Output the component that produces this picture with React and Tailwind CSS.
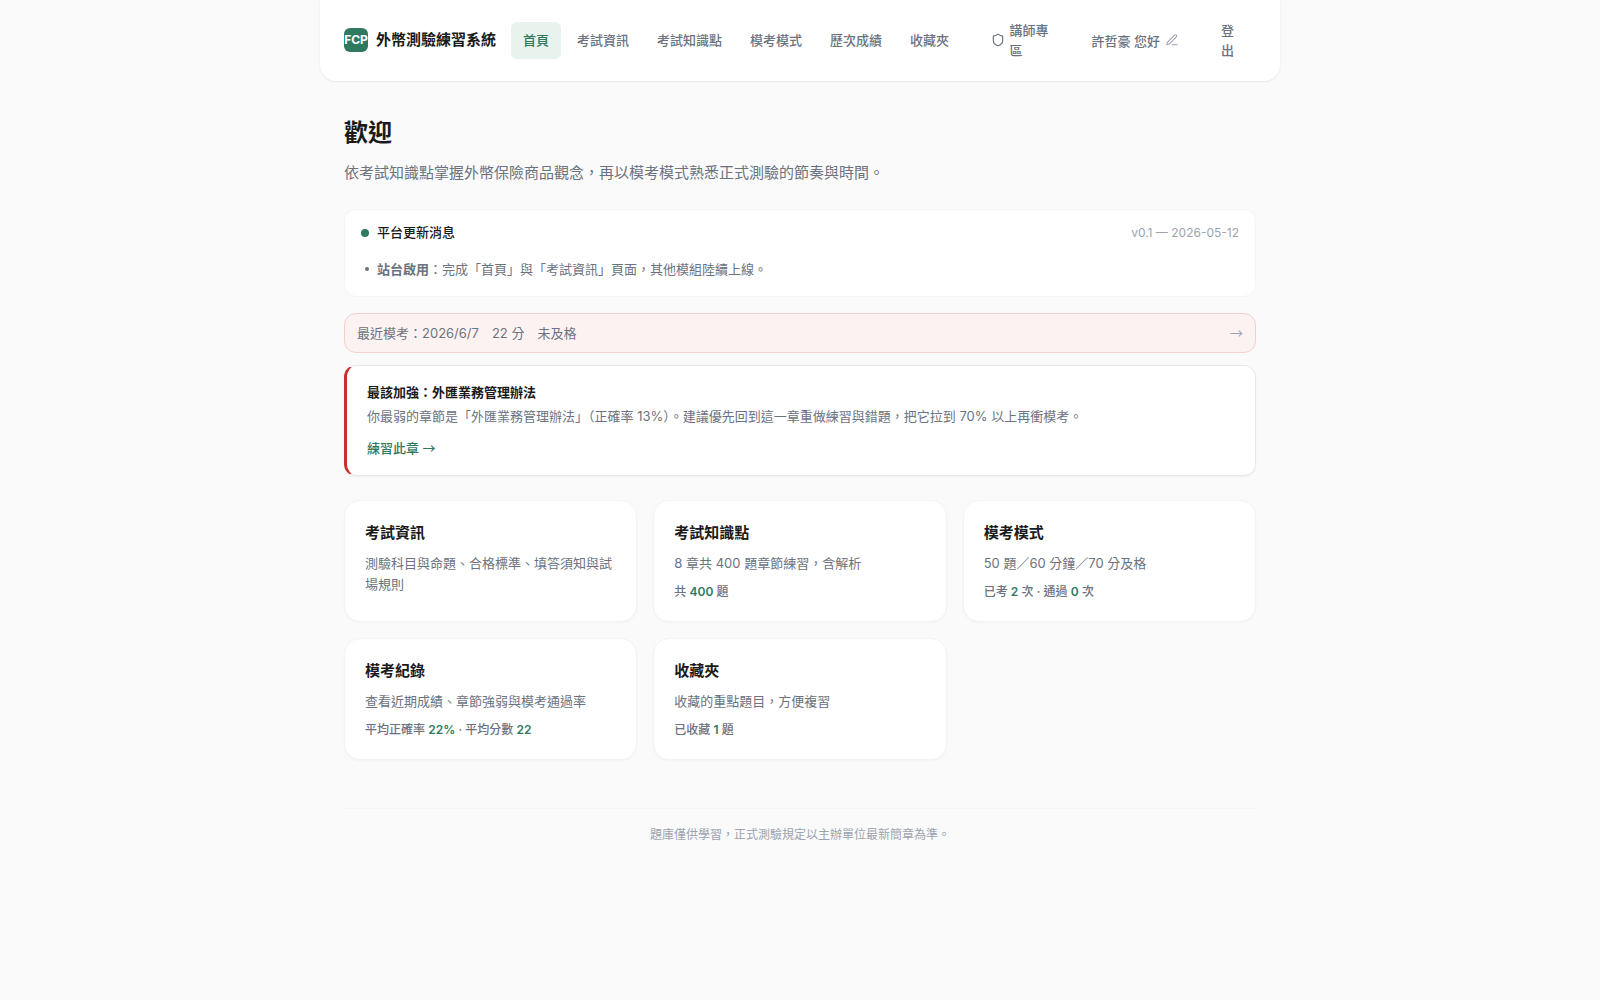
import React from 'react';

const navItems = ['首頁', '考試資訊', '考試知識點', '模考模式', '歷次成績', '收藏夾'];

const cards = [
  { title: '考試資訊', desc: '測驗科目與命題、合格標準、填答須知與試場規則' },
  { title: '考試知識點', desc: '8 章共 400 題章節練習，含解析', meta: ['共 ', '400', ' 題'] },
  { title: '模考模式', desc: '50 題／60 分鐘／70 分及格', meta: ['已考 ', '2', ' 次 · 通過 ', '0', ' 次'] },
  { title: '模考紀錄', desc: '查看近期成績、章節強弱與模考通過率', meta: ['平均正確率 ', '22%', ' · 平均分數 ', '22'] },
  { title: '收藏夾', desc: '收藏的重點題目，方便複習', meta: ['已收藏 ', '1', ' 題'] },
];

const ShieldIcon = () => (
  <svg width="14" height="14" viewBox="0 0 24 24" fill="none" stroke="currentColor" strokeWidth="2" strokeLinecap="round" strokeLinejoin="round" className="shrink-0">
    <path d="M20 13c0 5-3.5 7.5-7.66 8.95a1 1 0 0 1-.67-.01C7.5 20.5 4 18 4 13V6a1 1 0 0 1 1-1c2 0 4.5-1.2 6.24-2.72a1.17 1.17 0 0 1 1.52 0C14.51 3.81 17 5 19 5a1 1 0 0 1 1 1z" />
  </svg>
);

const PenIcon = () => (
  <svg width="14" height="14" viewBox="0 0 24 24" fill="none" stroke="currentColor" strokeWidth="1.8" strokeLinecap="round" strokeLinejoin="round">
    <path d="M12 20h9" />
    <path d="M16.5 3.5a2.121 2.121 0 0 1 3 3L7 19l-4 1 1-4L16.5 3.5z" />
  </svg>
);

const Arrow = () => <span className="font-['Noto_Sans_CJK_TC',sans-serif]">→</span>;

const Header = () => (
  <header className="flex items-center rounded-b-2xl bg-white px-6 pt-5 pb-[21px] shadow-[0_1px_2px_rgba(0,0,0,0.08)]">
    <a href="#home" className="flex shrink-0 items-center gap-2">
      <span className="flex h-6 w-6 items-center justify-center rounded-md bg-[#2f7a5f] text-xs font-bold text-white">FCP</span>
      <span className="text-[15px] font-bold text-[#1a1a1a]">外幣測驗練習系統</span>
    </a>
    <nav className="ml-[15px] flex shrink-0 gap-1">
      {navItems.map((item, index) => (
        <a
          key={item}
          href="#nav"
          className={`rounded-md px-3 py-2 text-[13px] leading-[21px] font-medium ${index === 0 ? 'bg-[#e8f3ee] text-[#2f7a5f]' : 'text-[#6b7280]'}`}
        >
          {item}
        </a>
      ))}
    </nav>
    <div className="ml-auto flex items-center text-[13px] font-medium text-[#6b7280]">
      <a href="#instructor" className="flex items-center gap-[5px]">
        <ShieldIcon />
        <span className="w-10 leading-5">講師專區</span>
      </a>
      <div className="ml-[42px] flex items-center gap-[5px]">
        <span className="pt-1 whitespace-nowrap">許哲豪 您好</span>
        <button type="button" aria-label="編輯姓名" className="text-[#9ca3af]">
          <PenIcon />
        </button>
      </div>
      <button type="button" className="mr-5 ml-[42px] w-[15px] text-left leading-5">登出</button>
    </div>
  </header>
);

const Card = ({ title, desc, meta }) => (
  <a href="#card" className="block rounded-2xl border border-[#f3f4f6] bg-white p-5 shadow-[0_1px_2px_rgba(0,0,0,0.03)]">
    <h2 className="text-[15px] leading-6 font-semibold text-[#1a1a1a]">{title}</h2>
    <p className="mt-2 text-[13px] leading-[21px] text-[#6b7280]">{desc}</p>
    {meta && (
      <p className="mt-2 text-xs leading-[19px] font-medium text-[#6b7280]">
        {meta.map((part, i) => (i % 2 ? <strong key={i} className="font-semibold text-[#2f7a5f]">{part}</strong> : part))}
      </p>
    )}
  </a>
);

const App = () => {
  return (
    <div lang="zh-Hant" className="min-h-screen bg-[#fafafa] font-['Inter','Noto_Sans_CJK_TC',sans-serif] text-[#1a1a1a] antialiased">
      <div className="mx-auto max-w-[960px]">
        <Header />
        <main className="px-6 pt-8">
          <h1 className="text-2xl leading-10 font-bold">歡迎</h1>
          <p className="mt-2 text-[15px] leading-6 text-[#6b7280]">依考試知識點掌握外幣保險商品觀念，再以模考模式熟悉正式測驗的節奏與時間。</p>

          <section className="mt-6 rounded-xl border border-[#f3f4f6] bg-white px-4 py-3">
            <div className="flex items-center gap-2">
              <span className="h-2 w-2 rounded-full bg-[#2f7a5f]" />
              <h2 className="text-[13px] leading-[21px] font-medium">平台更新消息</h2>
              <span className="ml-auto text-xs text-[#9ca3af]">v0.1 — 2026-05-12</span>
            </div>
            <ul className="mt-[15px] mb-1 pl-1 text-[13px] leading-[22px] text-[#6b7280]">
              <li className="flex items-center gap-2">
                <span className="h-1 w-1 rounded-full bg-[#6b7280]" />
                <span><strong className="font-semibold">站台啟用</strong>：完成「首頁」與「考試資訊」頁面，其他模組陸續上線。</span>
              </li>
            </ul>
          </section>

          <a href="#latest" className="mt-4 flex items-center justify-between rounded-xl border border-[#f5cfcd] bg-[#fdf2f2] px-3 py-2 text-[13px] leading-[21px] text-[#6b7280]">
            <span>最近模考：2026/6/7　22 分　未及格</span>
            <span className="text-[#9ca3af]"><Arrow /></span>
          </a>

          <section className="mt-3 rounded-xl border border-l-3 border-[#e8e8e8] border-l-[#c9302c] bg-white px-5 py-4 shadow-[0_1px_2px_rgba(0,0,0,0.04)]">
            <h2 className="text-[13px] leading-[21px] font-semibold">最該加強：外匯業務管理辦法</h2>
            <p className="mt-[3px] text-[13px] leading-[21px] text-[#6b7280]">你最弱的章節是「外匯業務管理辦法」（正確率 13%）。建議優先回到這一章重做練習與錯題，把它拉到 70% 以上再衝模考。</p>
            <a href="#practice" className="mt-[10px] inline-block text-[13px] leading-[21px] font-medium text-[#2f7a5f]">練習此章 <Arrow /></a>
          </section>

          <section className="mt-6 grid grid-cols-3 gap-4">
            {cards.map((card) => (
              <Card key={card.title} {...card} />
            ))}
          </section>

          <footer className="mt-12 border-t border-[#f3f4f6] pt-4 pb-8 text-center text-xs leading-[19px] text-[#9ca3af]">
            題庫僅供學習，正式測驗規定以主辦單位最新簡章為準。
          </footer>
        </main>
      </div>
    </div>
  );
};

export default App;
